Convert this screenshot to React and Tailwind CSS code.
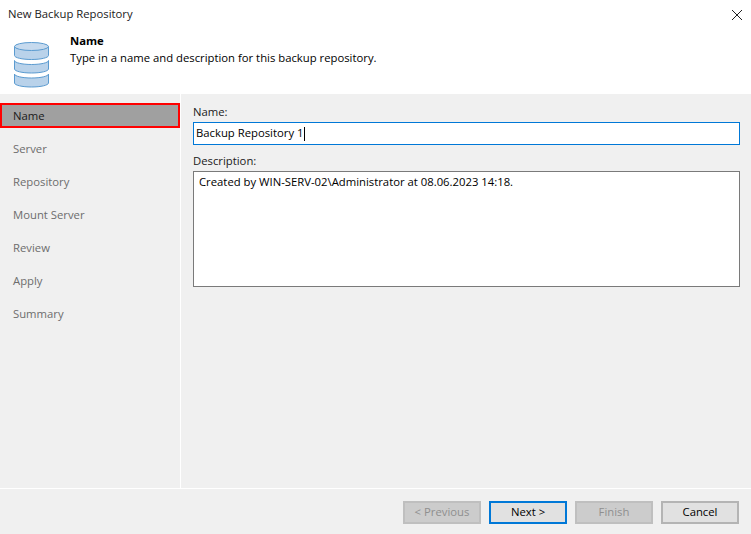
const font = { fontFamily: "'Open Sans', 'Noto Sans', sans-serif" }

const steps = ["Server", "Repository", "Mount Server", "Review", "Apply", "Summary"]

function DbIcon() {
  return (
    <svg width="38" height="46" viewBox="0 0 38 46" fill="none" stroke="#5b9bd0" strokeWidth="1">
      <path d="M1.500 32c0 2.200 7.600 4 17 4s17-1.800 17-4v9c0 2.200-7.600 4-17 4s-17-1.800-17-4z" fill="#b9d2ea" />
      <path d="M1.500 18.500c0 2.200 7.600 4 17 4s17-1.800 17-4v8.500c0 2.200-7.600 4-17 4s-17-1.800-17-4z" fill="#b9d2ea" />
      <path d="M1.500 4.500v9c0 2.200 7.600 4 17 4s17-1.800 17-4v-9z" fill="#b9d2ea" />
      <ellipse cx="18.500" cy="4.500" rx="17" ry="4" fill="#c6daee" />
    </svg>
  )
}

function Btn({ children, kind }) {
  const cls =
    kind === "primary"
      ? "border-2 border-[#0078d7] bg-[#e1e1e1] text-black"
      : kind === "off"
        ? "border-2 border-[#bfbfbf] bg-[#cccccc] text-[#8f8f8f]"
        : "border-2 border-[#b4b4b4] bg-[#e1e1e1] text-black"
  return (
    <button className={`h-[23px] w-[78px] pb-[1px] text-[11.3px] leading-none flex items-center justify-center ${cls}`}>
      {children}
    </button>
  )
}

export default function App() {
  return (
    <div className="w-[751px] h-[534px] flex flex-col bg-[#f0f0f0] text-[11.3px] text-[#1a1a1a] overflow-hidden" style={font}>
      <div className="h-[94px] bg-white flex flex-col shrink-0">
        <div className="h-[29px] flex items-center justify-between pl-2 pr-2">
          <span>New Backup Repository</span>
          <svg width="12" height="12" viewBox="0 0 12 12" stroke="#222" strokeWidth="1">
            <path d="M1 1l10 10M11 1L1 11" />
          </svg>
        </div>
        <div className="flex pl-[13px] pt-[3px]">
          <div className="mt-[10px]"><DbIcon /></div>
          <div className="ml-[19px] leading-[17px]">
            <div className="font-bold text-black">Name</div>
            <div className="text-black">Type in a name and description for this backup repository.</div>
          </div>
        </div>
      </div>

      <div className="flex-1 flex min-h-0">
        <div className="w-[180px] shrink-0 pt-[9px]">
          <div className="h-[25px] bg-[#a0a0a0] border-2 border-[#ff0000] flex items-center pl-[11px] pt-[1px] text-[#1a1a1a]">Name</div>
          <div className="flex flex-col pt-[5px]">
            {steps.map((s) => (
              <div key={s} className="h-[33px] pl-[13px] flex items-center text-[#6d6d6d]">{s}</div>
            ))}
          </div>
        </div>
        <div className="w-[1px] bg-white shrink-0" />
        <div className="flex-1 pl-3 pr-[11px] pt-[9px]">
          <div className="leading-[18px]">Name:</div>
          <div className="mt-[1px] h-[23px] border border-[#0078d7] bg-white flex items-center pl-[2px] text-black">
            Backup Repository 1<span className="w-[1px] h-[14px] bg-black ml-[1px]" />
          </div>
          <div className="mt-[7px] leading-[18px]">Description:</div>
          <div className="mt-[1px] h-[116px] border border-[#7a7a7a] bg-white pl-[5px] pt-[1px] leading-[18px] text-black">
            Created by WIN-SERV-02\Administrator at 08.06.2023 14:18.
          </div>
        </div>
      </div>

      <div className="h-[46px] shrink-0 border-t border-white flex items-start justify-end gap-2 pt-[12px] pr-3">
        <Btn kind="off">{"< Previous"}</Btn>
        <Btn kind="primary">{"Next >"}</Btn>
        <Btn kind="off">Finish</Btn>
        <Btn>Cancel</Btn>
      </div>
    </div>
  )
}
